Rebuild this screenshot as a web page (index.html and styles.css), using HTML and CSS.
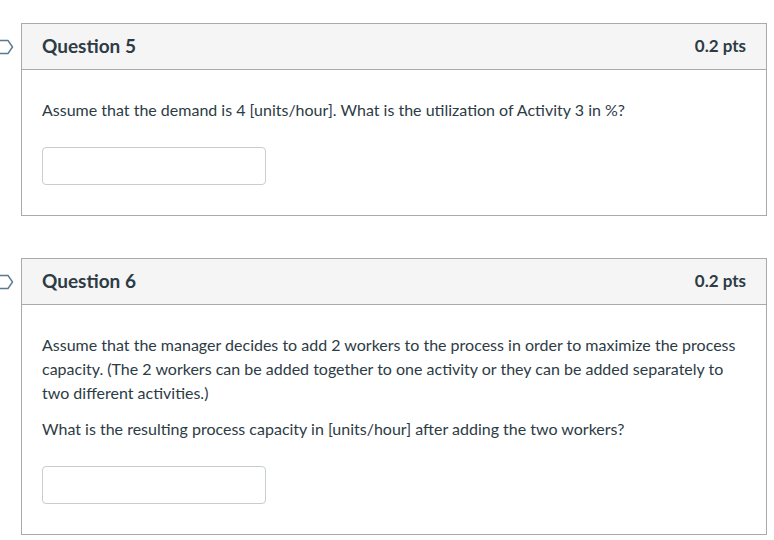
FILE: index.html
```html
<!DOCTYPE html>
<html>
<head>
<meta charset="utf-8">
<link rel="stylesheet" href="styles.css">
</head>
<body>
<div class="page">
  <div class="q-row">
    <div class="flag-col">
      <svg class="flag" width="14" height="16" viewBox="0 0 14 16"><path d="M-4 1.5 H8 L12.5 8 L8 14.5 H-4" fill="none" stroke="#5a7a92" stroke-width="1.4" stroke-linejoin="round"/></svg>
    </div>
    <div class="question">
      <div class="q-header">
        <span class="q-title">Question 5</span>
        <span class="q-points">0.2 pts</span>
      </div>
      <div class="q-body">
        <p>Assume that the demand is 4 [units/hour]. What is the utilization of Activity 3 in %?</p>
        <div class="answer"></div>
      </div>
    </div>
  </div>
  <div class="q-row">
    <div class="flag-col">
      <svg class="flag" width="14" height="16" viewBox="0 0 14 16"><path d="M-4 1.5 H8 L12.5 8 L8 14.5 H-4" fill="none" stroke="#5a7a92" stroke-width="1.4" stroke-linejoin="round"/></svg>
    </div>
    <div class="question">
      <div class="q-header">
        <span class="q-title">Question 6</span>
        <span class="q-points">0.2 pts</span>
      </div>
      <div class="q-body">
        <p>Assume that the manager decides to add 2 workers to the process in order to maximize the process capacity. (The 2 workers can be added together to one activity or they can be added separately to two different activities.)</p>
        <p>What is the resulting process capacity in [units/hour] after adding the two workers?</p>
        <div class="answer"></div>
      </div>
    </div>
  </div>
</div>
</body>
</html>
```
FILE: styles.css
```css
html, body {
  margin: 0;
  padding: 0;
  background: #ffffff;
}
body {
  font-family: Lato, "Open Sans", sans-serif;
  color: #2d3b45;
  width: 774px;
  overflow: hidden;
}
.page {
  padding-top: 23px;
}
.q-row {
  display: flex;
  align-items: flex-start;
  margin-bottom: 42px;
}
.flag-col {
  width: 21px;
  height: 47px;
  display: flex;
  align-items: center;
  flex: none;
}
.flag {
  display: block;
}
.question {
  width: 746px;
  box-sizing: border-box;
  border: 1px solid #aaaaaa;
  background: #ffffff;
}
.q-header {
  height: 46px;
  box-sizing: border-box;
  background: #f5f5f5;
  border-bottom: 1px solid #aaaaaa;
  display: flex;
  align-items: center;
  justify-content: space-between;
  padding: 0 20px 2px 20px;
}
.q-title {
  font-weight: 700;
  font-size: 19px;
}
.q-points {
  font-weight: 700;
  font-size: 17px;
}
.q-body {
  padding: 28px 20px 30px 20px;
}
.q-body p {
  margin: 0 0 12px 0;
  font-size: 16px;
  line-height: 24px;
}
.answer {
  width: 224px;
  height: 38px;
  box-sizing: border-box;
  border: 1px solid #c7cdd1;
  border-radius: 4px;
  background: #fff;
}
.q-body p:last-of-type {
  margin-bottom: 0;
}
.q-body p + .answer {
  margin-top: 25px;
}
```
